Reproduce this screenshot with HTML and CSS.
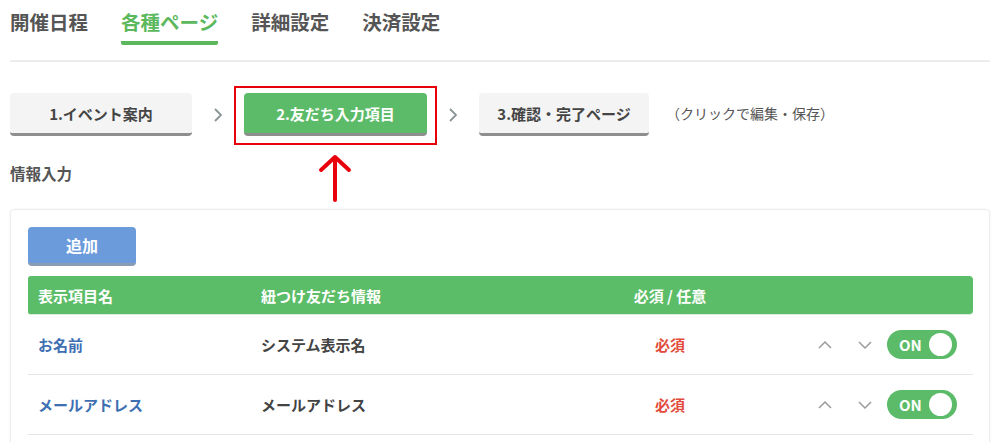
FILE: index.html
```html
<!DOCTYPE html>
<html lang="ja">
<head>
    <meta charset="UTF-8">
    <meta name="viewport" content="width=device-width, initial-scale=1.0">
    <title>各種ページ - 友だち入力項目</title>
    <link rel="stylesheet" href="styles.css">
</head>
<body>
    <div class="page">
        <nav class="tabs">
            <a class="tab">開催日程</a>
            <a class="tab active">各種ページ</a>
            <a class="tab">詳細設定</a>
            <a class="tab">決済設定</a>
        </nav>

        <div class="steps">
            <button class="step">1.イベント案内</button>
            <svg class="step-arrow" width="10" height="16" viewBox="0 0 10 16"><path d="M2 2 L8 8 L2 14" fill="none" stroke="#8a9396" stroke-width="1.8"/></svg>
            <div class="step-mark">
                <button class="step current">2.友だち入力項目</button>
                <span class="mark-box"></span>
                <svg class="mark-arrow" width="34" height="48" viewBox="0 0 34 48"><path d="M17 3 L17 46 M3 16 L17 3 L31 16" fill="none" stroke="#e8000b" stroke-width="4" stroke-linecap="round" stroke-linejoin="round"/></svg>
            </div>
            <svg class="step-arrow" width="10" height="16" viewBox="0 0 10 16"><path d="M2 2 L8 8 L2 14" fill="none" stroke="#8a9396" stroke-width="1.8"/></svg>
            <button class="step last">3.確認・完了ページ</button>
            <span class="step-note">（クリックで編集・保存）</span>
        </div>

        <h2 class="section-title">情報入力</h2>

        <div class="card">
            <button class="add-btn">追加</button>
            <div class="table">
                <div class="row head">
                    <div>表示項目名</div>
                    <div>紐つけ友だち情報</div>
                    <div class="center">必須 / 任意</div>
                    <div></div>
                </div>
                <div class="row">
                    <div class="name">お名前</div>
                    <div>システム表示名</div>
                    <div class="center required">必須</div>
                    <div class="actions">
                        <svg width="16" height="10" viewBox="0 0 16 10"><path d="M2 8 L8 2 L14 8" fill="none" stroke="#9a9a9a" stroke-width="1.5"/></svg>
                        <svg width="16" height="10" viewBox="0 0 16 10"><path d="M2 2 L8 8 L14 2" fill="none" stroke="#9a9a9a" stroke-width="1.5"/></svg>
                        <span class="toggle">ON<span class="knob"></span></span>
                    </div>
                </div>
                <div class="row">
                    <div class="name">メールアドレス</div>
                    <div>メールアドレス</div>
                    <div class="center required">必須</div>
                    <div class="actions">
                        <svg width="16" height="10" viewBox="0 0 16 10"><path d="M2 8 L8 2 L14 8" fill="none" stroke="#9a9a9a" stroke-width="1.5"/></svg>
                        <svg width="16" height="10" viewBox="0 0 16 10"><path d="M2 2 L8 8 L14 2" fill="none" stroke="#9a9a9a" stroke-width="1.5"/></svg>
                        <span class="toggle">ON<span class="knob"></span></span>
                    </div>
                </div>
            </div>
        </div>
    </div>
</body>
</html>
```

FILE: styles.css
```css
body {
    margin: 0;
    font-family: "Noto Sans CJK JP", "Noto Sans", sans-serif;
    color: #4a4a4a;
    background: #fff;
}
.page {
    padding: 0 10px;
}
.tabs {
    display: flex;
    gap: 33px;
    padding-top: 7px;
    border-bottom: 2px solid #ececec;
    height: 53px;
}
.tab {
    font-size: 19.5px;
    font-weight: bold;
    color: #555;
    line-height: 30px;
    height: 34px;
}
.tab.active {
    color: #5cb85c;
    border-bottom: 4px solid #5cb85c;
    border-radius: 2px;
}
.steps {
    display: flex;
    align-items: center;
    gap: 21px;
    margin-top: 31px;
}
.step {
    width: 182px;
    height: 43px;
    border: none;
    border-bottom: 3px solid #8e8e8e;
    border-radius: 4px;
    background: #f4f4f4;
    color: #444;
    font-family: inherit;
    font-size: 15px;
    font-weight: bold;
    padding: 0;
}
.step.current {
    width: 183px;
    background: #5cbb68;
    color: #fff;
}
.step.last {
    width: 170px;
}
.step-arrow {
    flex: none;
}
.step-note {
    font-size: 14px;
    color: #555;
    margin-left: -4px;
    padding-bottom: 4px;
}
.step-mark {
    position: relative;
    height: 43px;
}
.mark-box {
    position: absolute;
    left: -10px;
    right: -10px;
    top: -7px;
    bottom: -9px;
    border: 2px solid #e8000b;
}
.mark-arrow {
    position: absolute;
    left: 74px;
    top: 61px;
}
.section-title {
    font-size: 15.5px;
    font-weight: bold;
    color: #555;
    margin: 25px 0 0;
    line-height: 24px;
}
.card {
    margin-top: 24px;
    border: 1px solid #ececec;
    border-radius: 4px;
    box-shadow: 0 0 3px rgba(0, 0, 0, 0.05);
    padding: 17px 16px 0 17px;
    height: 230px;
}
.add-btn {
    width: 108px;
    height: 39px;
    border: none;
    border-bottom: 3px solid #8a9cb3;
    border-radius: 4px;
    background: #6b9bdb;
    color: #fff;
    font-family: inherit;
    font-size: 16px;
    font-weight: bold;
}
.table {
    margin-top: 10px;
}
.row {
    display: grid;
    grid-template-columns: 223px 300px 238px 1fr;
    align-items: center;
    height: 59px;
    border-bottom: 1px solid #e6e6e6;
    font-size: 15px;
    font-weight: bold;
    color: #444;
}
.row > div:nth-child(-n+2) {
    padding-left: 10px;
}
.row.head {
    height: 38px;
    background: #5cbd68;
    color: #fff;
    border-bottom: 1px solid #d9eedb;
    border-radius: 3px 4px 4px 3px;
}
.center {
    text-align: center;
}
.name {
    color: #3e6fb2;
}
.required {
    color: #e24b3b;
}
.actions {
    display: flex;
    align-items: center;
    justify-content: flex-end;
    gap: 24px;
    padding-right: 16px;
}
.toggle {
    position: relative;
    width: 70px;
    height: 29px;
    border-radius: 15px;
    background: #5cbb68;
    color: #fff;
    font-size: 15px;
    line-height: 29px;
    box-sizing: border-box;
    padding-left: 12px;
    margin-left: -10px;
}
.knob {
    position: absolute;
    right: 5px;
    top: 3px;
    width: 23px;
    height: 23px;
    border-radius: 50%;
    background: #fff;
}
```
